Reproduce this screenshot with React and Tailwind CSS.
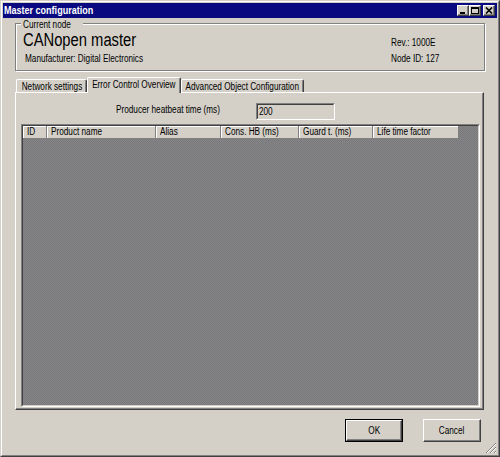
import React from "react";

const FONT = "font-['Liberation_Sans',Arial,sans-serif]";

function T({ children, center }) {
  return (
    <span
      className={
        center
          ? "inline-block whitespace-nowrap origin-center scale-x-[0.82]"
          : "inline-block whitespace-nowrap origin-left scale-x-[0.82]"
      }
    >
      {children}
    </span>
  );
}

function TitleButton({ children }) {
  return (
    <div className="w-[12px] h-[11px] bg-[#d4d0c8] border border-t-white border-l-white border-r-[#404040] border-b-[#404040] shadow-[inset_-1px_-1px_0_#808080] flex items-center justify-center">
      {children}
    </div>
  );
}

function Tab({ label, selected, w }) {
  if (selected) {
    return (
      <div
        className={`relative z-10 h-[16px] -mb-[1px] bg-[#d4d0c8] border-l border-t border-r border-l-white border-t-white border-r-[#404040] rounded-t-[2px] shadow-[inset_-1px_0_0_#808080] flex justify-center pt-[1px] text-[10px] leading-[12px] text-black ${w}`}
      >
        <T center>{label}</T>
      </div>
    );
  }
  return (
    <div
      className={`h-[13px] bg-[#d4d0c8] border-l border-t border-r border-l-white border-t-white border-r-[#404040] rounded-t-[2px] shadow-[inset_-1px_0_0_#808080] flex justify-center pt-[1px] text-[10px] leading-[12px] text-black ${w}`}
    >
      <T center>{label}</T>
    </div>
  );
}

function HeaderCell({ label, w }) {
  return (
    <div
      className={`h-full bg-[#d4d0c8] border-r border-b border-r-[#808080] border-b-[#808080] shadow-[inset_1px_1px_0_#fff] pl-[4px] text-[10px] leading-[12px] text-black whitespace-nowrap overflow-hidden ${w}`}
    >
      <T>{label}</T>
    </div>
  );
}

export default function App() {
  return (
    <div className={`w-[500px] h-[457px] bg-[#d4d0c8] ${FONT}`}>
      <div className="relative w-[500px] h-[457px] border border-t-[#d4d0c8] border-l-[#d4d0c8] border-r-[#404040] border-b-[#404040]">
        <div className="h-full border border-t-white border-l-white border-r-[#808080] border-b-[#808080] p-[1px] flex flex-col">
          {/* Title bar */}
          <div className="h-[15px] bg-[#0a0a80] flex items-center pl-[1px] pr-[2px]">
            <div className="flex-1 text-white font-bold text-[11px] leading-[15px]">
              <T>Master configuration</T>
            </div>
            <div className="flex items-center">
              <TitleButton>
                <svg width="8" height="7" viewBox="0 0 8 7">
                  <rect x="1" y="5" width="5" height="2" fill="#000" />
                </svg>
              </TitleButton>
              <TitleButton>
                <svg width="8" height="7" viewBox="0 0 8 7">
                  <rect x="0.5" y="0.5" width="7" height="6" fill="none" stroke="#000" />
                  <rect x="0" y="0" width="8" height="2" fill="#000" />
                </svg>
              </TitleButton>
              <div className="w-[2px]" />
              <TitleButton>
                <svg width="8" height="7" viewBox="0 0 8 7">
                  <path d="M1 0.5 L7 6.5 M7 0.5 L1 6.5" stroke="#000" strokeWidth="1.6" />
                </svg>
              </TitleButton>
            </div>
          </div>

          {/* Current node group */}
          <div className="relative mt-[5px] mx-[12px] h-[48px] border border-[#808080] shadow-[1px_1px_0_#fff,inset_1px_1px_0_#fff]">
            <div className="absolute -top-[5px] left-[5px] px-[2px] bg-[#d4d0c8] text-[10px] leading-[12px] text-black">
              <T>Current node</T>
            </div>
            <div className="pt-[6px] pl-[7px] text-black">
              <div className="flex items-baseline">
                <div className="w-[368px] text-[18px] leading-[20px]">
                  <T>CANopen master</T>
                </div>
                <div className="text-[10px] leading-[12px]">
                  <T>Rev.: 1000E</T>
                </div>
              </div>
              <div className="flex mt-[3px]">
                <div className="w-[368px] pl-[2px] text-[10px] leading-[12px]">
                  <T>Manufacturer: Digital Electronics</T>
                </div>
                <div className="text-[10px] leading-[12px]">
                  <T>Node ID: 127</T>
                </div>
              </div>
            </div>
          </div>

          {/* Tabs */}
          <div className="mt-[6px] mx-[12px] h-[15px] flex items-end pl-[1px]">
            <Tab label="Network settings" w="w-[71px]" />
            <Tab label="Error Control Overview" selected w="w-[94px]" />
            <Tab label="Advanced Object Configuration" w="w-[123px]" />
          </div>

          {/* Tab panel */}
          <div className="mx-[12px] w-[469px] h-[318px] border border-t-white border-l-white border-r-[#404040] border-b-[#404040] shadow-[inset_-1px_-1px_0_#808080] pt-[10px] flex flex-col">
            <div className="flex items-start h-[17px]">
              <div className="ml-[100px] w-[140px] mt-[1px] text-[10px] leading-[12px] text-black">
                <T>Producer heatbeat time (ms)</T>
              </div>
              <div className="w-[79px] h-[17px] border border-t-[#808080] border-l-[#808080] border-r-white border-b-white">
                <div className="h-full border border-t-[#404040] border-l-[#404040] border-r-[#d4d0c8] border-b-[#d4d0c8] bg-[#d4d0c8] pl-[1px] text-[10px] leading-[13px] text-black">
                  <T>200</T>
                </div>
              </div>
            </div>

            {/* List view */}
            <div className="ml-[5px] mt-[4px] w-[459px] h-[283px] border border-t-[#808080] border-l-[#808080] border-r-white border-b-white">
              <div className="h-full border border-t-[#404040] border-l-[#404040] border-r-[#d4d0c8] border-b-[#d4d0c8] bg-[#7f7f81] bg-[image:repeating-conic-gradient(#78787a_0%_25%,#87878a_0%_50%)] bg-[length:2px_2px]">
                <div className="flex h-[13px]">
                  <HeaderCell label="ID" w="w-[24px]" />
                  <HeaderCell label="Product name" w="w-[109px]" />
                  <HeaderCell label="Alias" w="w-[65px]" />
                  <HeaderCell label="Cons. HB (ms)" w="w-[78px]" />
                  <HeaderCell label="Guard t. (ms)" w="w-[74px]" />
                  <HeaderCell label="Life time factor" w="w-[86px]" />
                </div>
              </div>
            </div>
          </div>

          {/* Buttons */}
          <div className="mt-[9px] flex justify-end gap-[20px] pr-[16px]">
            <div className="w-[58px] h-[23px] border border-black">
              <div className="h-full border border-t-white border-l-white border-r-[#404040] border-b-[#404040] shadow-[inset_-1px_-1px_0_#808080] flex items-center justify-center text-[10px] leading-[12px] text-black">
                <T center>OK</T>
              </div>
            </div>
            <div className="w-[58px] h-[23px] border border-t-white border-l-white border-r-[#404040] border-b-[#404040] shadow-[inset_-1px_-1px_0_#808080] flex items-center justify-center text-[10px] leading-[12px] text-black">
              <T center>Cancel</T>
            </div>
          </div>
        </div>

        {/* Resize grip */}
        <svg
          className="absolute right-[2px] bottom-[2px]"
          width="12"
          height="12"
          viewBox="0 0 12 12"
        >
          <path d="M11 1 L1 11 M11 5 L5 11 M11 9 L9 11" stroke="#808080" strokeWidth="1" />
          <path d="M11 2 L2 11 M11 6 L6 11 M11 10 L10 11" stroke="#fff" strokeWidth="1" />
        </svg>
      </div>
    </div>
  );
}
